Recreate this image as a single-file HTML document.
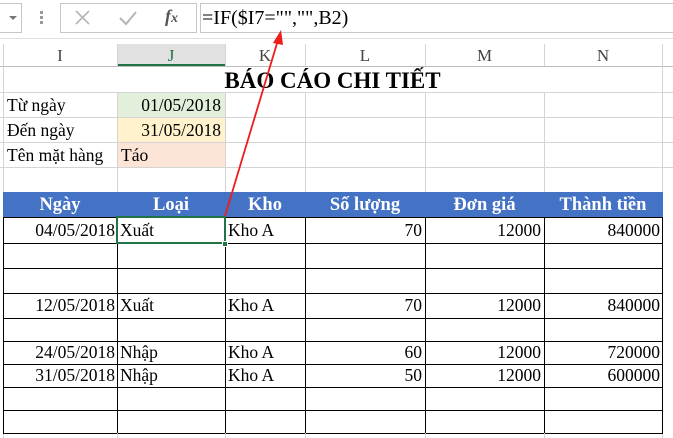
<!DOCTYPE html>
<html><head><meta charset="utf-8"><style>
body{margin:0;width:673px;height:438px;overflow:hidden;background:#fff;font-family:"Liberation Serif","Times New Roman",serif;position:relative}
div{position:absolute;box-sizing:border-box}
.t{font-size:17.5px;color:#000;white-space:nowrap;line-height:1}
.ch{font-size:17px;color:#444;top:47px;text-align:center;line-height:1}
.hl{left:0;width:673px;height:1px;background:#d4d4d4}
.vl{width:1px;background:#d4d4d4}
.bh{left:3px;width:660px;height:1px;background:#000}
.bv{width:1px;background:#000;top:217px;height:216px}
.hd{color:#fff;font-weight:bold;font-size:18.5px;top:196px;text-align:center;line-height:1;white-space:nowrap}
</style></head><body>
<!-- toolbar -->
<div style="left:-2px;top:3px;width:24px;height:30px;border:1px solid #c6c6c6"></div>
<div style="left:9px;top:16px;width:0;height:0;border-left:4px solid transparent;border-right:4px solid transparent;border-top:4px solid #777"></div>
<div style="left:40px;top:11px;width:3px;height:3px;background:#999"></div>
<div style="left:40px;top:16px;width:3px;height:3px;background:#999"></div>
<div style="left:40px;top:21px;width:3px;height:3px;background:#999"></div>
<div style="left:60px;top:3px;width:137px;height:30px;border:1px solid #c6c6c6"></div>
<svg style="position:absolute;left:0;top:0" width="673" height="438">
<path d="M76 11 L89 24 M89 11 L76 24" stroke="#b5b5b5" stroke-width="1.6" fill="none"/>
<path d="M120 18 L126 24 L136 12" stroke="#b5b5b5" stroke-width="2" fill="none"/>
</svg>
<div class="t" style="left:165px;top:7px;font-style:italic;font-weight:bold;font-size:18px;color:#555">f<span style="font-size:14px">x</span></div>
<div style="left:200px;top:3px;width:480px;height:30px;border:1px solid #c6c6c6"></div>
<div class="t" style="left:202px;top:8px;font-size:20px">=IF($I7="","",B2)</div>
<div style="left:0;top:38px;width:673px;height:1px;background:#e0e0e0"></div>
<!-- column headers -->
<div style="left:117px;top:44px;width:108px;height:22px;background:#e1e1e1"></div>
<div style="left:117px;top:64px;width:108px;height:2px;background:#217346"></div>
<div class="hl" style="top:66px;background:#bdbdbd"></div>
<div class="vl" style="left:3px;top:44px;height:394px"></div>
<div class="vl" style="left:117px;top:44px;height:22px"></div>
<div class="vl" style="left:225px;top:44px;height:22px"></div>
<div class="vl" style="left:305px;top:44px;height:22px"></div>
<div class="vl" style="left:425px;top:44px;height:22px"></div>
<div class="vl" style="left:544px;top:44px;height:22px"></div>
<div class="vl" style="left:662px;top:44px;height:394px"></div>
<div class="ch" style="left:3px;width:114px">I</div>
<div class="ch" style="left:117px;width:108px;color:#217346">J</div>
<div class="ch" style="left:225px;width:80px">K</div>
<div class="ch" style="left:305px;width:120px">L</div>
<div class="ch" style="left:425px;width:119px">M</div>
<div class="ch" style="left:544px;width:118px">N</div>
<!-- grid upper -->
<div class="hl" style="top:92px"></div>
<div class="hl" style="top:117px"></div>
<div class="hl" style="top:142px"></div>
<div class="hl" style="top:167px"></div>
<div class="vl" style="left:117px;top:92px;height:100px"></div>
<div class="vl" style="left:225px;top:92px;height:100px"></div>
<div class="vl" style="left:305px;top:92px;height:100px"></div>
<div class="vl" style="left:425px;top:92px;height:100px"></div>
<div class="vl" style="left:544px;top:92px;height:100px"></div>
<div style="left:118px;top:93px;width:107px;height:24px;background:#e2efda"></div>
<div style="left:118px;top:118px;width:107px;height:24px;background:#fff2cc"></div>
<div style="left:118px;top:143px;width:107px;height:24px;background:#fce4d6"></div>
<div class="t" style="left:3px;width:659px;top:69px;text-align:center;font-weight:bold;font-size:23px">BÁO CÁO CHI TIẾT</div>
<div class="t" style="left:7px;top:97px">Từ ngày</div>
<div class="t" style="left:7px;top:122px">Đến ngày</div>
<div class="t" style="left:7px;top:147px">Tên mặt hàng</div>
<div class="t" style="left:117px;width:104px;top:97px;text-align:right">01/05/2018</div>
<div class="t" style="left:117px;width:104px;top:122px;text-align:right">31/05/2018</div>
<div class="t" style="left:121px;top:147px">Táo</div>
<!-- table header -->
<div style="left:3px;top:192px;width:660px;height:25px;background:#4472c4"></div>
<div class="hd" style="left:3px;width:114px">Ngày</div>
<div class="hd" style="left:117px;width:108px">Loại</div>
<div class="hd" style="left:225px;width:80px">Kho</div>
<div class="hd" style="left:305px;width:120px">Số lượng</div>
<div class="hd" style="left:425px;width:119px">Đơn giá</div>
<div class="hd" style="left:544px;width:118px">Thành tiền</div>
<!-- table grid -->
<div class="bh" style="top:217px"></div>
<div class="bh" style="top:243px"></div>
<div class="bh" style="top:268px"></div>
<div class="bh" style="top:293px"></div>
<div class="bh" style="top:318px"></div>
<div class="bh" style="top:341px"></div>
<div class="bh" style="top:364px"></div>
<div class="bh" style="top:387px"></div>
<div class="bh" style="top:410px"></div>
<div class="bh" style="top:433px"></div>
<div class="bv" style="left:3px"></div>
<div class="bv" style="left:117px"></div>
<div class="bv" style="left:225px"></div>
<div class="bv" style="left:305px"></div>
<div class="bv" style="left:425px"></div>
<div class="bv" style="left:544px"></div>
<div class="bv" style="left:662px;height:217px"></div>
<div class="vl" style="left:117px;top:433px;height:5px"></div>
<div class="vl" style="left:225px;top:433px;height:5px"></div>
<div class="vl" style="left:305px;top:433px;height:5px"></div>
<div class="vl" style="left:425px;top:433px;height:5px"></div>
<div class="vl" style="left:544px;top:433px;height:5px"></div>
<!-- data -->
<div class="t" style="left:3px;width:112px;top:222px;text-align:right">04/05/2018</div>
<div class="t" style="left:120px;top:222px">Xuất</div>
<div class="t" style="left:228px;top:222px">Kho A</div>
<div class="t" style="left:305px;width:117px;top:222px;text-align:right">70</div>
<div class="t" style="left:425px;width:116px;top:222px;text-align:right">12000</div>
<div class="t" style="left:544px;width:116px;top:222px;text-align:right">840000</div>

<div class="t" style="left:3px;width:112px;top:297px;text-align:right">12/05/2018</div>
<div class="t" style="left:120px;top:297px">Xuất</div>
<div class="t" style="left:228px;top:297px">Kho A</div>
<div class="t" style="left:305px;width:117px;top:297px;text-align:right">70</div>
<div class="t" style="left:425px;width:116px;top:297px;text-align:right">12000</div>
<div class="t" style="left:544px;width:116px;top:297px;text-align:right">840000</div>

<div class="t" style="left:3px;width:112px;top:344px;text-align:right">24/05/2018</div>
<div class="t" style="left:120px;top:344px">Nhập</div>
<div class="t" style="left:228px;top:344px">Kho A</div>
<div class="t" style="left:305px;width:117px;top:344px;text-align:right">60</div>
<div class="t" style="left:425px;width:116px;top:344px;text-align:right">12000</div>
<div class="t" style="left:544px;width:116px;top:344px;text-align:right">720000</div>

<div class="t" style="left:3px;width:112px;top:367px;text-align:right">31/05/2018</div>
<div class="t" style="left:120px;top:367px">Nhập</div>
<div class="t" style="left:228px;top:367px">Kho A</div>
<div class="t" style="left:305px;width:117px;top:367px;text-align:right">50</div>
<div class="t" style="left:425px;width:116px;top:367px;text-align:right">12000</div>
<div class="t" style="left:544px;width:116px;top:367px;text-align:right">600000</div>
<!-- selection -->
<div style="left:116px;top:216px;width:110px;height:28px;border:2px solid #217346"></div>
<div style="left:222px;top:241px;width:6px;height:6px;background:#217346;border:1px solid #fff"></div>
<!-- arrow -->
<svg style="position:absolute;left:0;top:0" width="673" height="438">
<line x1="225" y1="216" x2="278" y2="40" stroke="#ee1c1c" stroke-width="1.8"/>
<path d="M281 30 L273 43 L283 45 Z" fill="#ee1c1c"/>
</svg>
</body></html>
